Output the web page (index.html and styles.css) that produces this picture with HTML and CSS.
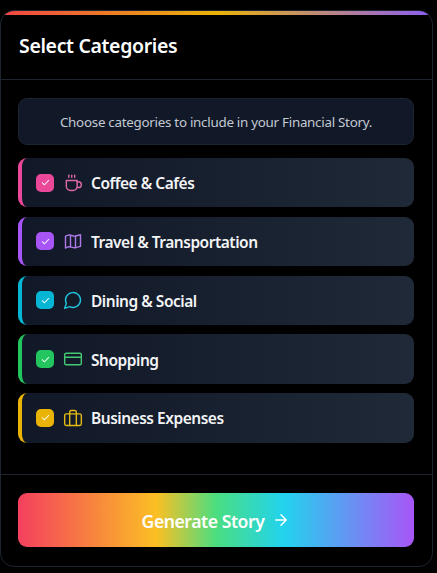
FILE: index.html
```html
<!DOCTYPE html>
<html lang="en">
<head>
<meta charset="utf-8">
<title>Select Categories</title>
<link rel="stylesheet" href="styles.css">
</head>
<body>
<main class="card">
  <div class="rainbow"></div>
  <header class="head"><h1>Select Categories</h1></header>
  <section class="content">
    <p class="info">Choose categories to include in your Financial Story.</p>
    <ul class="list">
      <li class="row pink">
        <span class="check"><svg viewBox="0 0 24 24"><path d="M5 12.500l4.500 4.500L19 7.500"/></svg></span>
        <svg class="icon" viewBox="0 0 24 24"><path d="M4 9h13v7a5 5 0 0 1-5 5H9a5 5 0 0 1-5-5z"/><path d="M17 10.500h1.500a3.500 3.500 0 0 1 0 7H17"/><path d="M7 2.500v2.500M10.500 2.500v2.500M14 2.500v2.500"/></svg>
        <span class="label">Coffee &amp; Cafés</span>
      </li>
      <li class="row purple">
        <span class="check"><svg viewBox="0 0 24 24"><path d="M5 12.500l4.500 4.500L19 7.500"/></svg></span>
        <svg class="icon" viewBox="0 0 24 24"><path d="M3 6.500c2-1.500 4-2 6-1.500s4 1.500 6 1 4-1 6-1.500v14c-2 .5-4 1-6 1.500s-4-.5-6-1-4 0-6 1.500z"/><path d="M9 5v14M15 6.500V20"/></svg>
        <span class="label">Travel &amp; Transportation</span>
      </li>
      <li class="row cyan">
        <span class="check"><svg viewBox="0 0 24 24"><path d="M5 12.500l4.500 4.500L19 7.500"/></svg></span>
        <svg class="icon" viewBox="0 0 24 24"><path d="M7.900 20A9 9 0 1 0 4 16.100L2 22z"/></svg>
        <span class="label">Dining &amp; Social</span>
      </li>
      <li class="row green">
        <span class="check"><svg viewBox="0 0 24 24"><path d="M5 12.500l4.500 4.500L19 7.500"/></svg></span>
        <svg class="icon" viewBox="0 0 24 24"><rect x="2" y="5" width="20" height="14" rx="2"/><path d="M2 10h20"/></svg>
        <span class="label">Shopping</span>
      </li>
      <li class="row yellow">
        <span class="check"><svg viewBox="0 0 24 24"><path d="M5 12.500l4.500 4.500L19 7.500"/></svg></span>
        <svg class="icon" viewBox="0 0 24 24"><rect x="2" y="7" width="20" height="14" rx="2"/><path d="M8 21V5a2 2 0 0 1 2-2h4a2 2 0 0 1 2 2v16"/></svg>
        <span class="label">Business Expenses</span>
      </li>
    </ul>
  </section>
  <footer class="foot">
    <button class="generate" type="button"><span class="gen-text">Generate Story</span>
      <svg viewBox="0 0 24 24"><path d="M5 12h14M12 5l7 7-7 7"/></svg>
    </button>
  </footer>
</main>
</body>
</html>
```
FILE: styles.css
```css
* { box-sizing: border-box; }
html, body { margin: 0; height: 100%; background: #000; overflow: hidden; }
body { padding: 10px 4px 6px 0; font-family: "Noto Sans", "Open Sans", sans-serif; color: #fff; }
.card { position: relative; height: 557px; border: 1px solid #1e2531; border-radius: 14px; background: #000; overflow: hidden; }
.rainbow { position: absolute; top: -1px; left: -1px; right: -1px; height: 5px; background: linear-gradient(90deg, #ef4444, #eab308 50%, #8b5cf6); }
.head { height: 69px; padding: 1px 17px 0 18px; display: flex; align-items: center; border-bottom: 1px solid #1e2531; }
h1 { margin: 0; font-size: 19.500px; font-weight: 600; letter-spacing: -0.35px; }
.content { padding: 18px 18px 0 17px; }
.info { margin: 0; height: 47px; display: flex; align-items: center; justify-content: center; border: 1px solid #1c2533; border-radius: 9px; background: #111827; color: #c4cad4; font-size: 13.400px; letter-spacing: -0.28px; }
.list { list-style: none; margin: 13px 0 0; padding: 0; display: flex; flex-direction: column; gap: 9.400px; }
.row { height: 49.400px; display: flex; align-items: center; padding-left: 14px; border-left: 4px solid; border-radius: 9px; background: linear-gradient(90deg, #111827, #1f2937); }
.row .check { width: 18px; height: 18px; border-radius: 5px; display: flex; align-items: center; justify-content: center; margin-right: 9px; }
.check svg { width: 11px; height: 11px; fill: none; stroke: #fff; stroke-width: 2.200; stroke-linecap: round; stroke-linejoin: round; opacity: .9; }
.icon { width: 20px; height: 20px; fill: none; stroke-width: 1.700; stroke-linecap: round; stroke-linejoin: round; margin-right: 8px; opacity: .9; }
.label { padding-top: 1px; font-size: 15.500px; font-weight: 600; letter-spacing: -0.48px; color: #f3f4f6; }
.pink { border-color: #ec4899; }
.pink .check { background: #ec4899; }
.pink .icon { stroke: #f472b6; }
.purple { border-color: #a855f7; }
.purple .check { background: #a855f7; }
.purple .icon { stroke: #c084fc; }
.cyan { border-color: #06b6d4; }
.cyan .check { background: #06b6d4; }
.cyan .icon { stroke: #22d3ee; }
.green { border-color: #22c55e; }
.green .check { background: #22c55e; }
.green .icon { stroke: #4ade80; }
.yellow { border-color: #eab308; }
.yellow .check { background: #eab308; }
.yellow .icon { stroke: #facc15; }
.foot { position: absolute; left: 0; right: 0; bottom: 0; height: 92px; border-top: 1px solid #1e2531; padding: 18px 18px 0 17px; }
.generate { width: 100%; height: 54px; border: 0; border-radius: 9px; display: flex; align-items: center; justify-content: center; gap: 8px; color: #fff; font: 600 17.600px "Noto Sans", "Open Sans", sans-serif; letter-spacing: -0.45px; background: linear-gradient(90deg, #f43f5e, #fbbf24 35%, #4ade80 50%, #22d3ee 67%, #a855f7); }
.gen-text { padding-top: 1px; }
.generate svg { width: 18px; height: 18px; fill: none; stroke: #fff; stroke-width: 2; stroke-linecap: round; stroke-linejoin: round; }
```
